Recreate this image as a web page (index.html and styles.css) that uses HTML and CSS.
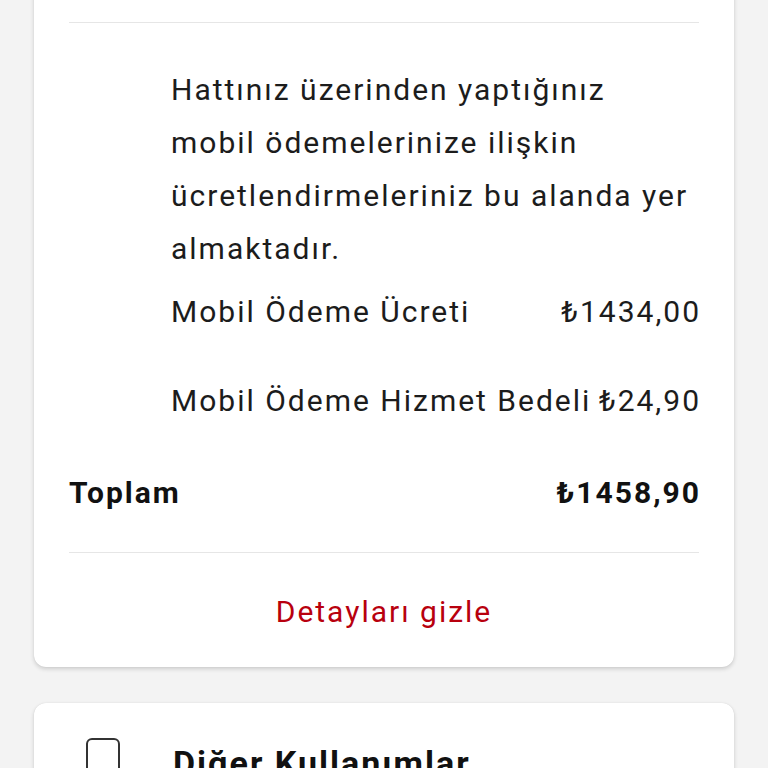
FILE: index.html
```html
<!DOCTYPE html>
<html lang="tr">
<head>
<meta charset="utf-8">
<link rel="stylesheet" href="styles.css">
</head>
<body>
<div class="page">
  <section class="card card-top">
    <hr class="sep sep-top">
    <div class="details">
      <p class="desc">Hattınız üzerinden yaptığınız mobil ödemelerinize ilişkin ücretlendirmeleriniz bu alanda yer almaktadır.</p>
      <div class="row row-first"><span>Mobil Ödeme Ücreti</span><span>₺1434,00</span></div>
      <div class="row row-second"><span>Mobil Ödeme Hizmet Bedeli</span><span>₺24,90</span></div>
    </div>
    <div class="total"><span>Toplam</span><span>₺1458,90</span></div>
    <hr class="sep sep-bottom">
    <div class="toggle">Detayları gizle</div>
  </section>
  <section class="card card-next">
    <div class="head">
      <span class="check"></span>
      <span class="title">Diğer Kullanımlar</span>
    </div>
  </section>
</div>
</body>
</html>
```
FILE: styles.css
```css
* { box-sizing: border-box; }
html, body { margin: 0; padding: 0; }
body {
  background: #f3f3f3;
  font-family: Roboto, "Noto Sans", sans-serif;
  color: #1c1c1c;
  height: 768px;
  overflow: hidden;
  letter-spacing: 2px;
}
.page {
  padding: 0 34px;
  display: flex;
  flex-direction: column;
  gap: 36px;
}
.card {
  background: #fff;
  border-radius: 12px;
  box-shadow: 0 2px 4px rgba(0,0,0,0.16), 0 0 1px rgba(0,0,0,0.12);
  padding: 0 35px;
}
.card-top {
  margin-top: -30px;
  padding-top: 52px;
  padding-bottom: 29px;
}
.sep {
  border: 0;
  border-top: 1px solid #e6e6e6;
  margin: 0;
}
.details {
  padding-left: 102px;
  font-size: 30px;
  line-height: 53px;
}
.desc {
  margin: 40px 0 10px;
}
.row {
  display: flex;
  justify-content: space-between;
}
.row span:last-child { margin-right: -2px; }
.row-second { margin-top: 36px; }
.total {
  display: flex;
  justify-content: space-between;
  font-size: 30px;
  font-weight: 700;
  line-height: 53px;
  margin-top: 39px;
  color: #111;
}
.total span:last-child { margin-right: -2px; }
.sep-bottom { margin-top: 33px; }
.toggle {
  text-align: center;
  color: #b8000e;
  font-size: 30px;
  line-height: 53px;
  margin-top: 32px;
}
.card-next {
  padding-top: 35px;
  height: 120px;
}
.head {
  display: flex;
  align-items: flex-start;
}
.check {
  width: 34px;
  height: 40px;
  border: 2px solid #333;
  border-radius: 6px;
  margin-left: 17px;
  flex: none;
}
.title {
  margin-left: 53px;
  margin-top: 5px;
  font-size: 34px;
  font-weight: 700;
  line-height: 40px;
  color: #111;
}
```
